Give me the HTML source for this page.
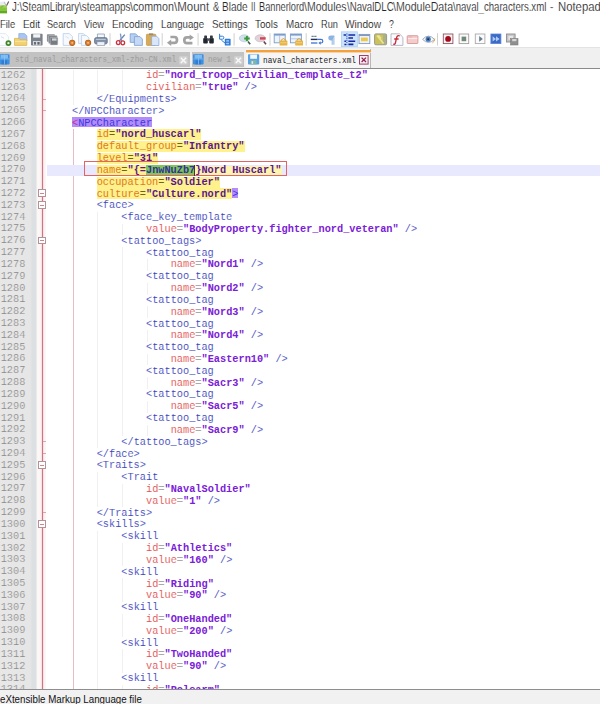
<!DOCTYPE html>
<html lang="en">
<head>
<meta charset="utf-8">
<title>naval_characters.xml - Notepad++</title>
<style>
html,body{margin:0;padding:0;}
body{width:600px;height:704px;overflow:hidden;background:#fff;position:relative;font-family:"Liberation Sans",sans-serif;}
#app{position:absolute;left:0;top:0;width:600px;height:704px;overflow:hidden;background:#fff;}
.abs{position:absolute;}
/* title */
#title{position:absolute;left:0;top:0;width:600px;height:15px;background:#fff;}
#title span{position:absolute;top:1.4px;font-size:12.3px;line-height:12px;color:#262626;white-space:pre;transform-origin:0 50%;}
/* menu */
#menu{position:absolute;left:0;top:15px;width:600px;height:15px;background:#fff;}
#menu span{position:absolute;top:2.6px;font-size:10.6px;line-height:12px;color:#111;white-space:pre;transform-origin:0 50%;}
/* toolbar */
#tb{position:absolute;left:0;top:30px;width:600px;height:18px;background:#fff;}
#tbline{position:absolute;left:0;top:47.3px;width:600px;height:1px;background:#e3e3e3;}
/* tabs */
#tabs{position:absolute;left:0;top:48.3px;width:600px;height:19.4px;background:#f0f0f0;}
.tab{position:absolute;top:3.5px;height:15.7px;background:#c2c2c2;}
.tab.act{top:0.8px;height:18.6px;background:#f6f6f6;border-right:1px solid #b8b8b8;}
.tab .tx{position:absolute;top:3.7px;font-family:"Liberation Mono",monospace;font-size:9px;line-height:10px;color:#9c9c9c;white-space:pre;transform:scaleX(0.852);transform-origin:0 50%;}
.tab.act .tx{top:6.6px;color:#222;transform:scaleX(0.861);}
#edtop{position:absolute;left:0;top:67.5px;width:600px;height:1.2px;background:#8a8a8a;}
/* editor */
#ed{position:absolute;left:0;top:68.6px;width:600px;height:620.6px;background:#fff;overflow:hidden;}
#edin{position:absolute;left:0;top:-68.6px;width:600px;height:704px;font-family:"Liberation Mono",monospace;font-size:10.283px;line-height:11.818px;}
#gut{position:absolute;left:0;top:60px;width:36.6px;height:640px;background:linear-gradient(90deg,#e7e7e7 0,#e6e6e6 30px,#dde0e3 32px,#dde0e3 35.6px,#ececec 36.6px);}
#fm{position:absolute;left:36.6px;top:60px;width:9.4px;height:640px;background:#fbf7f7;}
#fl{position:absolute;left:41.9px;top:60px;width:1px;height:640px;background:#cf7482;box-shadow:0 0 1.4px 0.5px #f3cdd3;}
.ln{position:absolute;left:0.7px;color:#8a8a8a;white-space:pre;height:11.818px;}
.cl{position:absolute;white-space:pre;height:11.818px;}
.t{color:#3842bc;}
.a{color:#e24c4c;}
.e{color:#2c2c2c;}
.v{color:#7a20d8;font-weight:bold;}
.T{color:#3a3ae0;background:linear-gradient(#b48cfa,#b48cfa) 0 0.8px/100% 10.2px no-repeat;}
.Y{background:linear-gradient(#fff18c,#fff18c) 0 0.8px/100% 11.1px no-repeat;}
.Y2{background:linear-gradient(#fff4b0,#fff4b0) 0 1.6px/100% 9.6px no-repeat;}
.Y .a{color:#e07a1c;}
.Y .e{color:#6a6420;}
.Y .v{color:#5a1890;}
.G{color:#34309c;font-weight:bold;background:linear-gradient(#80c658,#80c658) 0 0.6px/100% 10.4px no-repeat;}
.fb{position:absolute;left:38.3px;width:7.4px;height:7.4px;border:0.8px solid #b4929a;background:#fff;box-sizing:border-box;}
.fb:after{content:"";position:absolute;left:0.9px;top:2.35px;width:3.8px;height:0.9px;background:#d0858e;}
.ft{position:absolute;left:42.6px;width:3.8px;height:1px;background:#e0a4aa;}
.ig{position:absolute;width:1px;background:#f0f0f3;}
/* status */
#stline{position:absolute;left:0;top:689px;width:600px;height:1.2px;background:#8e8e8e;}
#status{position:absolute;left:0;top:690.2px;width:600px;height:15px;background:#f1f1f1;}
#status span{position:absolute;left:0px;top:2.9px;font-size:11px;line-height:13px;color:#111;white-space:pre;transform-origin:0 50%;}
.T1{color:#c8308c;}
#title span,#menu span{-webkit-text-stroke:0.14px #fff;}
.cl>.t,.cl>.a,.cl>.e{-webkit-text-stroke:0.1px #fff;}
.ln{-webkit-text-stroke:0.18px #e6e6e6;}
</style>
</head>
<body>
<div id="app">
<div id="title">
<svg class="abs" style="left:0;top:0" width="11" height="15" viewBox="0 0 11 15"><path d="M0 2 L5.4 1.2 L5.8 5.6 L0 6Z" fill="#e9edf4"/><path d="M0 5.8 Q3.2 4.6 7 6 L7 13.2 L0 13.2Z" fill="#86c63c"/><path d="M0 5.8 Q3.2 4.6 7 6 L7 7.8 L0 7.8Z" fill="#a0d252"/><path d="M0 11 H7 V13.2 H0Z" fill="#62a82a"/><path d="M8.7 1.5 L6.5 5.7" stroke="#5f5252" stroke-width="1.1"/><path d="M4.2 2.2 L6.2 5.6" stroke="#b7aeb4" stroke-width="0.9"/><path d="M0.4 7.2 L3.4 6.6" stroke="#6a9a3a" stroke-width="0.7"/></svg>

<span style="left:12.20px;transform:scaleX(0.779)">J:\SteamLibrary</span>
<span style="left:79.20px;transform:scaleX(0.812)">\steamapps</span>
<span style="left:130.45px;transform:scaleX(0.867)">\common</span>
<span style="left:173.95px;transform:scaleX(0.934)">\Mount</span>
<span style="left:212.70px;transform:scaleX(0.774)">&amp;</span>
<span style="left:222.20px;transform:scaleX(0.814)">Blade</span>
<span style="left:250.95px;transform:scaleX(0.636)">II</span>
<span style="left:258.95px;transform:scaleX(0.750)">Bannerlord</span>
<span style="left:303.95px;transform:scaleX(0.854)">\Modules</span>
<span style="left:346.70px;transform:scaleX(0.784)">\NavalDLC</span>
<span style="left:393.20px;transform:scaleX(0.862)">\ModuleData</span>
<span style="left:453.20px;transform:scaleX(0.780)">\naval_characters.xml</span>
<span style="left:550.20px;transform:scaleX(0.827)">-</span>
<span style="left:557.70px;transform:scaleX(0.920)">Notepad++</span>
</div>
<div id="menu">
<span style="left:0.20px;transform:scaleX(0.884)">File</span>
<span style="left:22.70px;transform:scaleX(0.936)">Edit</span>
<span style="left:47.20px;transform:scaleX(0.859)">Search</span>
<span style="left:83.95px;transform:scaleX(0.882)">View</span>
<span style="left:112.20px;transform:scaleX(0.930)">Encoding</span>
<span style="left:160.95px;transform:scaleX(0.914)">Language</span>
<span style="left:211.70px;transform:scaleX(0.930)">Settings</span>
<span style="left:255.45px;transform:scaleX(0.924)">Tools</span>
<span style="left:285.95px;transform:scaleX(0.929)">Macro</span>
<span style="left:320.95px;transform:scaleX(0.867)">Run</span>
<span style="left:345.45px;transform:scaleX(0.958)">Window</span>
<span style="left:389.20px;transform:scaleX(0.821)">?</span>
</div>
<div id="tb">
<svg class="abs" style="left:0;top:0" width="600" height="18" viewBox="0 30 600 18">
<!-- new -->
<path d="M-2 33.6 H5.4 L8.6 36.8 V45.4 H-2Z" fill="#fcfdfe" stroke="#dde5ef" stroke-width="0.8"/>
<path d="M1 36.6 L4 38.2" stroke="#cfdaea" stroke-width="0.8"/>
<circle cx="8.4" cy="43.1" r="2.9" fill="#3f8426"/><circle cx="8.4" cy="43.1" r="1.2" fill="#e4f2da"/>
<!-- open -->
<path d="M18.8 33.6 H24.6 L26.9 36 V41 H18.8Z" fill="#a9c6f2" stroke="#86a9e0" stroke-width="0.7"/>
<path d="M14.5 38.4 H19 L20 39.6 H26.8 V45.4 H14.5Z" fill="#f2d272" stroke="#dcae45" stroke-width="0.7"/>
<path d="M15 41.4 H26.4" stroke="#f9e6a4" stroke-width="1"/>
<!-- save (gray) -->
<rect x="31" y="33.7" width="11.6" height="11.8" rx="0.8" fill="#7b828c"/>
<rect x="33.2" y="34.2" width="7" height="3.4" fill="#f1f3f6"/>
<rect x="33" y="41" width="7.6" height="4.2" fill="#d3d6db"/><rect x="34.2" y="42" width="1.6" height="2.6" fill="#4c525c"/><rect x="37.4" y="42" width="2.2" height="2.6" fill="#5d646e"/>
<!-- save all -->
<rect x="46.9" y="34.2" width="8" height="7.6" rx="0.8" fill="#8c9097"/>
<rect x="48.6" y="35.6" width="8.6" height="8" rx="0.8" fill="#7d8188" stroke="#c9ccd1" stroke-width="0.5"/>
<rect x="50.2" y="37.4" width="7.6" height="7.6" rx="0.8" fill="#777b82" stroke="#c9ccd1" stroke-width="0.5"/>
<rect x="52" y="38.4" width="4.6" height="2.2" fill="#d2d5da"/>
<!-- close -->
<path d="M63.2 33.6 H69.4 L72.4 36.6 V45.4 H63.2Z" fill="#f6f9fe" stroke="#b9cde8" stroke-width="0.8"/>
<path d="M65.4 36.2 L69 38.4" stroke="#d5e0f0" stroke-width="0.9"/>
<circle cx="72.2" cy="42.8" r="3.1" fill="#b5621c"/><circle cx="72.2" cy="42.8" r="2.3" fill="#de7f2e"/><circle cx="72.2" cy="42.8" r="0.9" fill="#f3c9a0"/>
<!-- close all -->
<path d="M78.6 33.6 H83.4 L85.8 36 V43.4 H78.6Z" fill="#f6f9fe" stroke="#b9cde8" stroke-width="0.8"/>
<path d="M81.4 35.4 H86.4 L89 38 V45.4 H81.4Z" fill="#f6f9fe" stroke="#b9cde8" stroke-width="0.8"/>
<circle cx="88.1" cy="42.8" r="3.1" fill="#b5621c"/><circle cx="88.1" cy="42.8" r="2.3" fill="#de7f2e"/><circle cx="88.1" cy="42.8" r="0.9" fill="#f3c9a0"/>
<!-- print -->
<path d="M97.4 38 V34 H104.4 V38" fill="#f4f7fb" stroke="#8a9ab0" stroke-width="0.8"/>
<rect x="94.5" y="37.6" width="12.8" height="6.4" rx="1.8" fill="#7f8fa6" stroke="#5f6f86" stroke-width="0.7"/>
<rect x="96" y="38.8" width="9.8" height="1.2" fill="#b9c5d6"/>
<rect x="97" y="41.8" width="7.8" height="3.6" fill="#eef2f7" stroke="#7d8ca3" stroke-width="0.6"/>
<line x1="110" y1="33.2" x2="110" y2="45.6" stroke="#c9c9c9" stroke-width="0.9"/>
<!-- cut -->
<path d="M124.8 34.6 L119.4 41" stroke="#6c86b4" stroke-width="1.4" fill="none"/>
<path d="M120.4 33.6 L121.6 41" stroke="#7d96c0" stroke-width="1.3" fill="none"/>
<ellipse cx="118.2" cy="42.6" rx="1.8" ry="2" fill="none" stroke="#c9303f" stroke-width="1.3"/>
<ellipse cx="122.8" cy="42.8" rx="1.8" ry="2" fill="none" stroke="#c9303f" stroke-width="1.3"/>
<!-- copy -->
<path d="M130.2 33.8 H135.6 L137.8 36 V42.4 H130.2Z" fill="#b7cff0" stroke="#7b9fd4" stroke-width="0.8"/>
<path d="M134.4 36.6 H140 L142.4 39 V45.4 H134.4Z" fill="#c5d9f4" stroke="#7b9fd4" stroke-width="0.8"/>
<!-- paste -->
<rect x="146.4" y="34.2" width="9.4" height="11.2" rx="0.8" fill="#d9aa54" stroke="#b98c3a" stroke-width="0.6"/>
<rect x="149" y="33.4" width="4.2" height="1.8" fill="#9a8a6a"/>
<path d="M151.6 36.2 H156.6 L158.9 38.6 V45.5 H151.6Z" fill="#dbe6f8" stroke="#8aa9dc" stroke-width="0.8"/>
<line x1="162.2" y1="33.2" x2="162.2" y2="45.6" stroke="#c9c9c9" stroke-width="0.9"/>
<!-- undo -->
<path d="M170.4 37 H174.4 Q177 37 177 39.9 Q177 42.8 174.4 42.8 H170.6" fill="none" stroke="#a2a2a2" stroke-width="2.7"/>
<path d="M171.2 39.6 L166.9 42.8 L171.2 46Z" fill="#a2a2a2"/>
<!-- redo -->
<path d="M192.4 43.2 H187 Q184.3 43.2 184.3 40.3 Q184.3 37.4 187 37.4 H190" fill="none" stroke="#a2a2a2" stroke-width="2.7"/>
<path d="M189.6 34.4 L193.9 37.4 L189.6 40.6Z" fill="#a2a2a2"/>
<line x1="198.1" y1="33.2" x2="198.1" y2="45.6" stroke="#c9c9c9" stroke-width="0.9"/>
<!-- find -->
<rect x="203.2" y="38" width="4.6" height="5.6" rx="1" fill="#22272d"/><rect x="209.2" y="38" width="4.6" height="5.6" rx="1" fill="#22272d"/>
<rect x="204.2" y="35.5" width="2.8" height="3.4" rx="0.6" fill="#333a43"/><rect x="210" y="35.5" width="2.8" height="3.4" rx="0.6" fill="#333a43"/>
<rect x="207.4" y="38.4" width="2.2" height="2.4" fill="#4a525d"/>
<!-- replace -->
<path d="M219.6 33.8 V39.2 H222.4 Q223.8 39.2 223.8 37.6 Q223.8 36.2 222.4 36.2 H219.8" stroke="#2f7ad6" stroke-width="1" fill="none"/>
<path d="M221.4 40.2 L225 43" stroke="#2f7ad6" stroke-width="1"/>
<rect x="224.8" y="38.8" width="5.8" height="6.7" rx="0.6" fill="#2f7ad6"/>
<rect x="226.2" y="40.2" width="2.8" height="1.4" fill="#a8ccf2"/><rect x="226.2" y="42.8" width="2.8" height="1.4" fill="#a8ccf2"/>
<line x1="234.1" y1="33.2" x2="234.1" y2="45.6" stroke="#c9c9c9" stroke-width="0.9"/>
<!-- zoom in -->
<ellipse cx="244.4" cy="38.3" rx="5.1" ry="3.5" fill="#cfe0ea" stroke="#b4c8d6" stroke-width="0.7"/>
<path d="M244.2 38.4 H249.6 M246.9 36 V40.9" stroke="#3a9a3a" stroke-width="2"/>
<path d="M248 41.6 L250.2 44.2" stroke="#3f5a46" stroke-width="1.6"/>
<!-- zoom out -->
<ellipse cx="260.2" cy="38.3" rx="5.1" ry="3.5" fill="#e0d2d9" stroke="#cbb6c0" stroke-width="0.7"/>
<path d="M260 38.4 H265.6" stroke="#d24658" stroke-width="2.4"/>
<path d="M263.8 41.6 L266 44.2" stroke="#6a4048" stroke-width="1.6"/>
<line x1="270" y1="33.2" x2="270" y2="45.6" stroke="#c9c9c9" stroke-width="0.9"/>
<!-- sync v -->
<rect x="274.2" y="34" width="11" height="8.8" fill="#eef4fc" stroke="#7d9ccc" stroke-width="0.9"/><rect x="274.2" y="34" width="11" height="1.6" fill="#7d9ccc"/>
<line x1="279.6" y1="35.4" x2="279.6" y2="42.6" stroke="#9db6dc" stroke-width="0.7"/>
<rect x="279.6" y="40.4" width="7.8" height="5.1" rx="0.6" fill="#e9b341"/><path d="M281.4 40.6 V39.8 Q283.5 37.4 285.6 39.8 V40.6" fill="none" stroke="#d6a032" stroke-width="1"/>
<rect x="280.4" y="42.4" width="6.2" height="0.8" fill="#f5d88c"/>
<!-- sync h -->
<rect x="290.4" y="34" width="11" height="8.8" fill="#eef4fc" stroke="#7d9ccc" stroke-width="0.9"/><rect x="290.4" y="34" width="11" height="1.6" fill="#7d9ccc"/>
<line x1="291" y1="38.8" x2="301" y2="38.8" stroke="#9db6dc" stroke-width="0.7"/>
<rect x="295.2" y="40.4" width="7.8" height="5.1" rx="0.6" fill="#e9b341"/><path d="M297 40.6 V39.8 Q299.1 37.4 301.2 39.8 V40.6" fill="none" stroke="#d6a032" stroke-width="1"/>
<rect x="296" y="42.4" width="6.2" height="0.8" fill="#f5d88c"/>
<line x1="306.2" y1="33.2" x2="306.2" y2="45.6" stroke="#c9c9c9" stroke-width="0.9"/>
<!-- wrap -->
<path d="M311.6 36.4 H317" stroke="#55607c" stroke-width="1.1" stroke-dasharray="1.2 0.6"/>
<path d="M310.8 39.4 H317.6" stroke="#1f2f5e" stroke-width="1.4"/>
<path d="M317.6 39.4 H321 Q322.8 39.4 322.8 41.2 Q322.8 43 321 43 H320" stroke="#3f74d2" stroke-width="1.2" fill="none"/>
<path d="M311 43 H317.4" stroke="#4a7cd6" stroke-width="1.4"/>
<path d="M320.6 41.2 L318.4 43 L320.6 44.8Z" fill="#3f74d2"/>
<!-- pilcrow -->
<path d="M332.2 36 V44.8 M333.9 36 V44.8" stroke="#8cb4e2" stroke-width="1"/>
<path d="M334.4 35.6 H331 Q328.3 35.6 328.3 38 Q328.3 40.4 331 40.4 H332.2Z" fill="#8cb4e2"/>
<!-- indent guide (active) -->
<rect x="341.4" y="31.8" width="16" height="14.9" fill="#cde3f9" stroke="#a6cdf4" stroke-width="0.7"/>
<path d="M346.9 33.4 V45.6" stroke="#2a50c8" stroke-width="1" stroke-dasharray="1.3 0.8"/>
<path d="M348.4 35 H355.2 M348.4 38 H353 M348.4 41.3 H355.2 M348.4 44.4 H353.4" stroke="#1428a8" stroke-width="1.6"/>
<path d="M343.6 35 H346 M344.4 41.3 H346 M344.4 44.4 H346" stroke="#1428a8" stroke-width="1.5"/>
<!-- udl -->
<rect x="359" y="34.4" width="10.8" height="9.2" fill="#eef2f8" stroke="#8099c2" stroke-width="0.9"/><rect x="359" y="34.4" width="10.8" height="1.6" fill="#8099c2"/>
<rect x="361" y="37.6" width="6.8" height="3.6" fill="#ebc94b"/>
<!-- doc map -->
<rect x="374.6" y="33.9" width="12" height="10.9" rx="1.2" fill="#cbc25c" stroke="#8f8f84" stroke-width="0.9"/>
<rect x="383" y="34.6" width="3" height="9.6" fill="#a9b08a"/>
<path d="M377 35.4 L383.6 43.4 M378.4 35.2 L381 38.4" stroke="#ece596" stroke-width="1.5"/>
<!-- function list -->
<path d="M391 33.8 H399.4 L402.9 37.2 V45.4 H391Z" fill="#fbfbfd" stroke="#a6abb6" stroke-width="0.8"/>
<path d="M399.8 36 Q397.2 34.8 396.6 37.6 L395.4 43 Q395 44.8 393.2 44 M394.2 39 H398.6" stroke="#c82a3a" stroke-width="1.3" fill="none"/>
<!-- folder as workspace -->
<rect x="407.2" y="35.7" width="10.7" height="7.8" rx="0.6" fill="#f5cccc" stroke="#da9494" stroke-width="0.9"/>
<path d="M408 38.6 H417.4" stroke="#fdf0f0" stroke-width="0.9"/><path d="M408.6 37 H412" stroke="#e2a0a0" stroke-width="0.7"/>
<!-- eye -->
<path d="M422.6 39.4 Q428.4 32.8 434.6 39.4 Q428.4 45.4 422.6 39.4Z" fill="#f5f8fc" stroke="#93a3ba" stroke-width="0.9"/>
<circle cx="428.2" cy="39.2" r="2.6" fill="#4a7ab8"/><circle cx="428.2" cy="39.2" r="1" fill="#1d2c48"/>
<path d="M432.4 42.8 Q435 41.4 434.8 38.6" stroke="#e2a550" stroke-width="1" fill="none"/>
<line x1="437.5" y1="33.2" x2="437.5" y2="45.6" stroke="#c9c9c9" stroke-width="0.9"/>
<!-- record -->
<rect x="443.3" y="34" width="9.6" height="9.6" fill="#fcf2f3" stroke="#8d5565" stroke-width="0.9"/><circle cx="448.1" cy="38.9" r="2.9" fill="#a30a1c"/>
<!-- stop -->
<rect x="459.1" y="34" width="9.6" height="9.6" fill="#fbfbfb" stroke="#a59c9c" stroke-width="0.9"/><rect x="461.6" y="36.6" width="4.6" height="4.6" fill="#70897a"/>
<!-- play -->
<rect x="475.3" y="34" width="9.6" height="9.6" fill="#fbfbfb" stroke="#aaaaaa" stroke-width="0.9"/><path d="M479.2 36 L482.8 38.9 L479.2 41.8Z" fill="#66788f"/>
<!-- play multi -->
<rect x="490.9" y="34" width="10" height="9.6" fill="#3a6ac8" stroke="#5a84d2" stroke-width="0.8"/>
<path d="M492.6 36.2 L496 38.9 L492.6 41.6Z M496 36.2 L499.6 38.9 L496 41.6Z" fill="#b2c8ee"/>
<!-- save macro -->
<rect x="506.5" y="34" width="8.6" height="8" fill="#c4c4c4" stroke="#8e8e8e" stroke-width="0.9"/>
<rect x="508.4" y="35.8" width="4.6" height="4" fill="#e6e6e6"/>
<rect x="510.6" y="38.6" width="7.4" height="6.4" fill="#8f8f8f" stroke="#7c7c7c" stroke-width="0.6"/>
<rect x="512.2" y="39" width="4.2" height="2.2" fill="#d6d6d6"/>
</svg>

</div>
<div id="tbline"></div>
<div id="tabs">
<div class="tab" style="left:0;width:190.2px">
<svg class="abs" style="left:-0.6px;top:2.4px" width="11" height="11" viewBox="0 0 11 11"><rect x="0" y="0.2" width="10.6" height="10.4" rx="0.8" fill="#3d8fe2"/><rect x="1.6" y="1" width="7.4" height="3.4" fill="#7dbcf2"/><rect x="0.4" y="4.6" width="9.8" height="0.7" fill="#8cc4f4"/><rect x="2.6" y="6.4" width="5.4" height="4" fill="#2f7dd0"/><rect x="5" y="0.6" width="0.7" height="10" fill="#8cc4f4"/></svg>
<span class="tx" style="left:14.6px">std_naval_characters_xml-zho-CN.xml</span>
<svg class="abs" style="left:179.4px;top:3.8px" width="9" height="9" viewBox="0 0 9 9"><rect x="0.2" y="0.2" width="8.4" height="8.4" rx="0.6" fill="#d2d2d2"/><path d="M1.8 1.8 L7 7 M7 1.8 L1.8 7" stroke="#f8f8f8" stroke-width="1.5"/></svg>
</div>
<div class="tab" style="left:191.8px;width:52.6px">
<svg class="abs" style="left:1.6px;top:2.4px" width="11" height="11" viewBox="0 0 11 11"><rect x="0" y="0.2" width="10.6" height="10.4" rx="0.8" fill="#3d8fe2"/><rect x="1.6" y="1" width="7.4" height="3.4" fill="#7dbcf2"/><rect x="0.4" y="4.6" width="9.8" height="0.7" fill="#8cc4f4"/><rect x="2.6" y="6.4" width="5.4" height="4" fill="#2f7dd0"/><rect x="5" y="0.6" width="0.7" height="10" fill="#8cc4f4"/></svg>
<span class="tx" style="left:16.6px">new 1</span>
<svg class="abs" style="left:42.6px;top:3.8px" width="9" height="9" viewBox="0 0 9 9"><rect x="0.2" y="0.2" width="8.4" height="8.4" rx="0.6" fill="#d2d2d2"/><path d="M1.8 1.8 L7 7 M7 1.8 L1.8 7" stroke="#f8f8f8" stroke-width="1.5"/></svg>
</div>
<div class="tab act" style="left:245.6px;width:124.4px">
<div class="abs" style="left:0;top:0.7px;width:125.4px;height:2.3px;background:#f2a13c"></div>
<div class="abs" style="left:0;top:3px;width:125.4px;height:0.9px;background:#f9d3a4"></div>
<svg class="abs" style="left:2.8px;top:5px" width="12" height="11" viewBox="0 0 12 11"><rect x="0" y="0.2" width="11.2" height="10.4" rx="0.8" fill="#5aa2e6"/><rect x="2.2" y="0.6" width="6.8" height="4.2" fill="#f2f7fc"/><rect x="2.6" y="6.2" width="6" height="4.2" fill="#7fb6a8"/><rect x="3.6" y="7.2" width="1.5" height="2.6" fill="#e2eefa"/></svg>
<span class="tx" style="left:17.8px">naval_characters.xml</span>
<svg class="abs" style="left:113.2px;top:5.8px" width="10" height="10" viewBox="0 0 10 10"><rect x="0.5" y="0.5" width="8.6" height="8.6" fill="#fbeef2" stroke="#a0406c" stroke-width="1"/><path d="M2.6 2.6 L7 7 M7 2.6 L2.6 7" stroke="#8a2450" stroke-width="1.3"/></svg>
</div>

</div>
<div id="edtop"></div>
<div id="ed"><div id="edin">
<div id="gut"></div><div id="fm"></div><div id="fl"></div>
<div class="ig" style="left:72.58px;top:70.00px;height:35.45px"></div>
<div class="ig" style="left:72.58px;top:129.09px;height:567.26px;background:#e6bcc8"></div>
<div class="ig" style="left:97.26px;top:70.00px;height:23.64px"></div>
<div class="ig" style="left:97.26px;top:211.82px;height:236.36px"></div>
<div class="ig" style="left:97.26px;top:471.81px;height:35.45px"></div>
<div class="ig" style="left:97.26px;top:530.90px;height:165.45px"></div>
<div class="ig" style="left:121.94px;top:70.00px;height:23.64px"></div>
<div class="ig" style="left:121.94px;top:223.63px;height:11.82px"></div>
<div class="ig" style="left:121.94px;top:247.27px;height:189.09px"></div>
<div class="ig" style="left:121.94px;top:483.63px;height:23.64px"></div>
<div class="ig" style="left:121.94px;top:542.72px;height:23.64px"></div>
<div class="ig" style="left:121.94px;top:578.17px;height:23.64px"></div>
<div class="ig" style="left:121.94px;top:613.63px;height:23.64px"></div>
<div class="ig" style="left:121.94px;top:649.08px;height:23.64px"></div>
<div class="ig" style="left:121.94px;top:684.54px;height:11.82px"></div>
<div class="ig" style="left:146.62px;top:259.09px;height:11.82px"></div>
<div class="ig" style="left:146.62px;top:282.72px;height:11.82px"></div>
<div class="ig" style="left:146.62px;top:306.36px;height:11.82px"></div>
<div class="ig" style="left:146.62px;top:330.00px;height:11.82px"></div>
<div class="ig" style="left:146.62px;top:353.63px;height:11.82px"></div>
<div class="ig" style="left:146.62px;top:377.27px;height:11.82px"></div>
<div class="ig" style="left:146.62px;top:400.90px;height:11.82px"></div>
<div class="ig" style="left:146.62px;top:424.54px;height:11.82px"></div>
<div class="abs" style="left:47.3px;top:164.54px;width:553px;height:11.82px;background:#e8e8ff"></div>
<div class="fb" style="top:189.39px"></div>
<div class="fb" style="top:201.21px"></div>
<div class="fb" style="top:236.66px"></div>
<div class="fb" style="top:461.20px"></div>
<div class="fb" style="top:520.29px"></div>
<div class="ft" style="top:98.55px"></div>
<div class="ft" style="top:110.36px"></div>
<div class="ft" style="top:441.27px"></div>
<div class="ft" style="top:453.08px"></div>
<div class="ft" style="top:512.17px"></div>
<div class="ln" style="top:69.80px">1262</div>
<div class="cl" style="top:70.40px;left:146.02px"><span class="a">id</span><span class="e">=</span><span class="v">"nord_troop_civilian_template_t2"</span></div>
<div class="ln" style="top:81.62px">1263</div>
<div class="cl" style="top:82.22px;left:146.02px"><span class="a">civilian</span><span class="e">=</span><span class="v">"true"</span><span class="t"> /&gt;</span></div>
<div class="ln" style="top:93.44px">1264</div>
<div class="cl" style="top:94.04px;left:96.66px"><span class="t">&lt;/Equipments&gt;</span></div>
<div class="ln" style="top:105.25px">1265</div>
<div class="cl" style="top:105.85px;left:71.98px"><span class="t">&lt;/NPCCharacter&gt;</span></div>
<div class="ln" style="top:117.07px">1266</div>
<div class="cl" style="top:117.67px;left:71.98px"><span class="T T1">&lt;</span><span class="T">NPCCharacter</span></div>
<div class="ln" style="top:128.89px">1267</div>
<div class="cl" style="top:129.49px;left:96.66px"><span class="Y"><span class="a">id</span><span class="e">=</span><span class="v">"nord_huscarl"</span></span></div>
<div class="ln" style="top:140.71px">1268</div>
<div class="cl" style="top:141.31px;left:96.66px"><span class="Y"><span class="a">default_group</span><span class="e">=</span><span class="v">"Infantry"</span></span></div>
<div class="ln" style="top:152.53px">1269</div>
<div class="cl" style="top:153.13px;left:96.66px"><span class="Y"><span class="a">level</span><span class="e">=</span><span class="v">"31"</span></span></div>
<div class="ln" style="top:164.34px">1270</div>
<div class="cl" style="top:164.94px;left:96.66px"><span class="Y"><span class="a">name</span><span class="e">=</span><span class="v">"{=</span><span class="G">JnwNuZb7</span></span><span class="Y Y2"><span class="v">}Nord Huscarl"</span></span></div>
<div class="ln" style="top:176.16px">1271</div>
<div class="cl" style="top:176.76px;left:96.66px"><span class="Y"><span class="a">occupation</span><span class="e">=</span><span class="v">"Soldier"</span></span></div>
<div class="ln" style="top:187.98px">1272</div>
<div class="cl" style="top:188.58px;left:96.66px"><span class="Y"><span class="a">culture</span><span class="e">=</span><span class="v">"Culture.nord"</span></span><span class="T">&gt;</span></div>
<div class="ln" style="top:199.80px">1273</div>
<div class="cl" style="top:200.40px;left:96.66px"><span class="t">&lt;face&gt;</span></div>
<div class="ln" style="top:211.62px">1274</div>
<div class="cl" style="top:212.22px;left:121.34px"><span class="t">&lt;face_key_template</span></div>
<div class="ln" style="top:223.43px">1275</div>
<div class="cl" style="top:224.03px;left:146.02px"><span class="a">value</span><span class="e">=</span><span class="v">"BodyProperty.fighter_nord_veteran"</span><span class="t"> /&gt;</span></div>
<div class="ln" style="top:235.25px">1276</div>
<div class="cl" style="top:235.85px;left:121.34px"><span class="t">&lt;tattoo_tags&gt;</span></div>
<div class="ln" style="top:247.07px">1277</div>
<div class="cl" style="top:247.67px;left:146.02px"><span class="t">&lt;tattoo_tag</span></div>
<div class="ln" style="top:258.89px">1278</div>
<div class="cl" style="top:259.49px;left:170.70px"><span class="a">name</span><span class="e">=</span><span class="v">"Nord1"</span><span class="t"> /&gt;</span></div>
<div class="ln" style="top:270.71px">1279</div>
<div class="cl" style="top:271.31px;left:146.02px"><span class="t">&lt;tattoo_tag</span></div>
<div class="ln" style="top:282.52px">1280</div>
<div class="cl" style="top:283.12px;left:170.70px"><span class="a">name</span><span class="e">=</span><span class="v">"Nord2"</span><span class="t"> /&gt;</span></div>
<div class="ln" style="top:294.34px">1281</div>
<div class="cl" style="top:294.94px;left:146.02px"><span class="t">&lt;tattoo_tag</span></div>
<div class="ln" style="top:306.16px">1282</div>
<div class="cl" style="top:306.76px;left:170.70px"><span class="a">name</span><span class="e">=</span><span class="v">"Nord3"</span><span class="t"> /&gt;</span></div>
<div class="ln" style="top:317.98px">1283</div>
<div class="cl" style="top:318.58px;left:146.02px"><span class="t">&lt;tattoo_tag</span></div>
<div class="ln" style="top:329.80px">1284</div>
<div class="cl" style="top:330.40px;left:170.70px"><span class="a">name</span><span class="e">=</span><span class="v">"Nord4"</span><span class="t"> /&gt;</span></div>
<div class="ln" style="top:341.61px">1285</div>
<div class="cl" style="top:342.21px;left:146.02px"><span class="t">&lt;tattoo_tag</span></div>
<div class="ln" style="top:353.43px">1286</div>
<div class="cl" style="top:354.03px;left:170.70px"><span class="a">name</span><span class="e">=</span><span class="v">"Eastern10"</span><span class="t"> /&gt;</span></div>
<div class="ln" style="top:365.25px">1287</div>
<div class="cl" style="top:365.85px;left:146.02px"><span class="t">&lt;tattoo_tag</span></div>
<div class="ln" style="top:377.07px">1288</div>
<div class="cl" style="top:377.67px;left:170.70px"><span class="a">name</span><span class="e">=</span><span class="v">"Sacr3"</span><span class="t"> /&gt;</span></div>
<div class="ln" style="top:388.89px">1289</div>
<div class="cl" style="top:389.49px;left:146.02px"><span class="t">&lt;tattoo_tag</span></div>
<div class="ln" style="top:400.70px">1290</div>
<div class="cl" style="top:401.30px;left:170.70px"><span class="a">name</span><span class="e">=</span><span class="v">"Sacr5"</span><span class="t"> /&gt;</span></div>
<div class="ln" style="top:412.52px">1291</div>
<div class="cl" style="top:413.12px;left:146.02px"><span class="t">&lt;tattoo_tag</span></div>
<div class="ln" style="top:424.34px">1292</div>
<div class="cl" style="top:424.94px;left:170.70px"><span class="a">name</span><span class="e">=</span><span class="v">"Sacr9"</span><span class="t"> /&gt;</span></div>
<div class="ln" style="top:436.16px">1293</div>
<div class="cl" style="top:436.76px;left:121.34px"><span class="t">&lt;/tattoo_tags&gt;</span></div>
<div class="ln" style="top:447.98px">1294</div>
<div class="cl" style="top:448.58px;left:96.66px"><span class="t">&lt;/face&gt;</span></div>
<div class="ln" style="top:459.79px">1295</div>
<div class="cl" style="top:460.39px;left:96.66px"><span class="t">&lt;Traits&gt;</span></div>
<div class="ln" style="top:471.61px">1296</div>
<div class="cl" style="top:472.21px;left:121.34px"><span class="t">&lt;Trait</span></div>
<div class="ln" style="top:483.43px">1297</div>
<div class="cl" style="top:484.03px;left:146.02px"><span class="a">id</span><span class="e">=</span><span class="v">"NavalSoldier"</span></div>
<div class="ln" style="top:495.25px">1298</div>
<div class="cl" style="top:495.85px;left:146.02px"><span class="a">value</span><span class="e">=</span><span class="v">"1"</span><span class="t"> /&gt;</span></div>
<div class="ln" style="top:507.07px">1299</div>
<div class="cl" style="top:507.67px;left:96.66px"><span class="t">&lt;/Traits&gt;</span></div>
<div class="ln" style="top:518.88px">1300</div>
<div class="cl" style="top:519.48px;left:96.66px"><span class="t">&lt;skills&gt;</span></div>
<div class="ln" style="top:530.70px">1301</div>
<div class="cl" style="top:531.30px;left:121.34px"><span class="t">&lt;skill</span></div>
<div class="ln" style="top:542.52px">1302</div>
<div class="cl" style="top:543.12px;left:146.02px"><span class="a">id</span><span class="e">=</span><span class="v">"Athletics"</span></div>
<div class="ln" style="top:554.34px">1303</div>
<div class="cl" style="top:554.94px;left:146.02px"><span class="a">value</span><span class="e">=</span><span class="v">"160"</span><span class="t"> /&gt;</span></div>
<div class="ln" style="top:566.16px">1304</div>
<div class="cl" style="top:566.76px;left:121.34px"><span class="t">&lt;skill</span></div>
<div class="ln" style="top:577.97px">1305</div>
<div class="cl" style="top:578.57px;left:146.02px"><span class="a">id</span><span class="e">=</span><span class="v">"Riding"</span></div>
<div class="ln" style="top:589.79px">1306</div>
<div class="cl" style="top:590.39px;left:146.02px"><span class="a">value</span><span class="e">=</span><span class="v">"90"</span><span class="t"> /&gt;</span></div>
<div class="ln" style="top:601.61px">1307</div>
<div class="cl" style="top:602.21px;left:121.34px"><span class="t">&lt;skill</span></div>
<div class="ln" style="top:613.43px">1308</div>
<div class="cl" style="top:614.03px;left:146.02px"><span class="a">id</span><span class="e">=</span><span class="v">"OneHanded"</span></div>
<div class="ln" style="top:625.25px">1309</div>
<div class="cl" style="top:625.85px;left:146.02px"><span class="a">value</span><span class="e">=</span><span class="v">"200"</span><span class="t"> /&gt;</span></div>
<div class="ln" style="top:637.06px">1310</div>
<div class="cl" style="top:637.66px;left:121.34px"><span class="t">&lt;skill</span></div>
<div class="ln" style="top:648.88px">1311</div>
<div class="cl" style="top:649.48px;left:146.02px"><span class="a">id</span><span class="e">=</span><span class="v">"TwoHanded"</span></div>
<div class="ln" style="top:660.70px">1312</div>
<div class="cl" style="top:661.30px;left:146.02px"><span class="a">value</span><span class="e">=</span><span class="v">"90"</span><span class="t"> /&gt;</span></div>
<div class="ln" style="top:672.52px">1313</div>
<div class="cl" style="top:673.12px;left:121.34px"><span class="t">&lt;skill</span></div>
<div class="ln" style="top:684.34px">1314</div>
<div class="cl" style="top:684.94px;left:146.02px"><span class="a">id</span><span class="e">=</span><span class="v">"Polearm"</span></div>
<div class="abs" style="left:84px;top:161.20px;width:203px;height:14.60px;border:0.9px solid #e46464;box-sizing:border-box"></div><div class="abs" style="left:194.48px;top:165.34px;width:0.9px;height:10.42px;background:#3a3a3a"></div>
</div></div>
<div id="stline"></div>
<div id="status"><span style="transform:scaleX(0.885)">eXtensible Markup Language file</span></div>
</div>
</body>
</html>
